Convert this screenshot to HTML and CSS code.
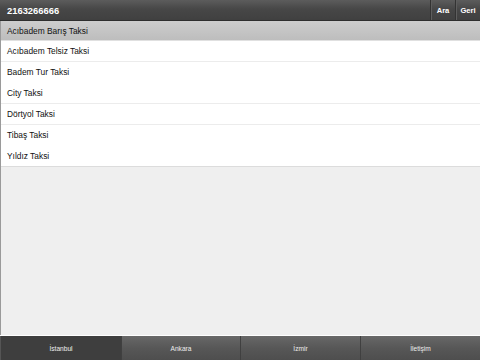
FILE: index.html
```html
<!DOCTYPE html>
<html lang="tr">
<head>
<meta charset="utf-8">
<link rel="stylesheet" href="styles.css">
</head>
<body>
<div class="app">
  <header class="header">
    <div class="title">2163266666</div>
    <div class="btn">Ara</div>
    <div class="btn">Geri</div>
  </header>
  <main class="content">
    <ul class="list">
      <li class="row selected">Acıbadem Barış Taksi</li>
      <li class="row sep">Acıbadem Telsiz Taksi</li>
      <li class="row">Badem Tur Taksi</li>
      <li class="row sep">City Taksi</li>
      <li class="row sep">Dörtyol Taksi</li>
      <li class="row">Tibaş Taksi</li>
      <li class="row last">Yıldız Taksi</li>
    </ul>
  </main>
  <nav class="tabbar">
    <div class="tab active">İstanbul</div>
    <div class="tab">Ankara</div>
    <div class="tab">İzmir</div>
    <div class="tab">İletişim</div>
  </nav>
</div>
</body>
</html>
```

FILE: styles.css
```css
* { box-sizing: border-box; }
html, body { margin: 0; padding: 0; }
body {
  font-family: "Liberation Sans", Arial, sans-serif;
  width: 480px;
  height: 360px;
  overflow: hidden;
  background: #efefef;
}
.app {
  display: flex;
  flex-direction: column;
  height: 360px;
}
.header {
  height: 21px;
  flex: 0 0 21px;
  display: flex;
  align-items: center;
  background: linear-gradient(#5c5c5c, #474747 45%, #404040);
  border-bottom: 1px solid #2e2e2e;
  color: #fff;
}
.title {
  flex: 1;
  padding-left: 7px;
  font-weight: bold;
  font-size: 9.4px;
}
.btn {
  height: 100%;
  display: flex;
  align-items: center;
  justify-content: center;
  font-weight: bold;
  font-size: 7.6px;
  border-left: 1px solid #333;
  box-shadow: inset 1px 0 0 #5e5e5e;
}
.btn:nth-child(2) { width: 25px; }
.btn:nth-child(3) { width: 25px; }
.content {
  flex: 1;
  border-left: 1px solid #9a9a9a;
  background: #efefef;
}
.list {
  list-style: none;
  margin: 0;
  padding: 0;
  background: #fff;
}
.row {
  height: 21px;
  display: flex;
  align-items: center;
  padding-left: 6px;
  font-size: 8.4px;
  color: #111;
  border-bottom: 1px solid transparent;
}
.row.sep { border-bottom-color: #ececec; }
.row.last { border-bottom-color: #dcdcdc; }
.row.selected {
  height: 20px;
  background: linear-gradient(#cdcdcd, #bdbdbd);
  border-bottom: 1px solid #e0e0e0;
  color: #111;
}
.tabbar {
  flex: 0 0 25px;
  height: 25px;
  display: grid;
  grid-template-columns: 121px 119px 120px 120px;
  border-top: 1px solid #fff;
  background: #555;
}
.tab {
  display: flex;
  align-items: center;
  justify-content: center;
  color: #eee;
  font-size: 6.6px;
  background: linear-gradient(#686868, #575757 50%, #4e4e4e);
  border-left: 1px solid #404040;
}
.tab.active {
  background: #3e3e3e;
  border-left: 1px solid #555;
}
```
